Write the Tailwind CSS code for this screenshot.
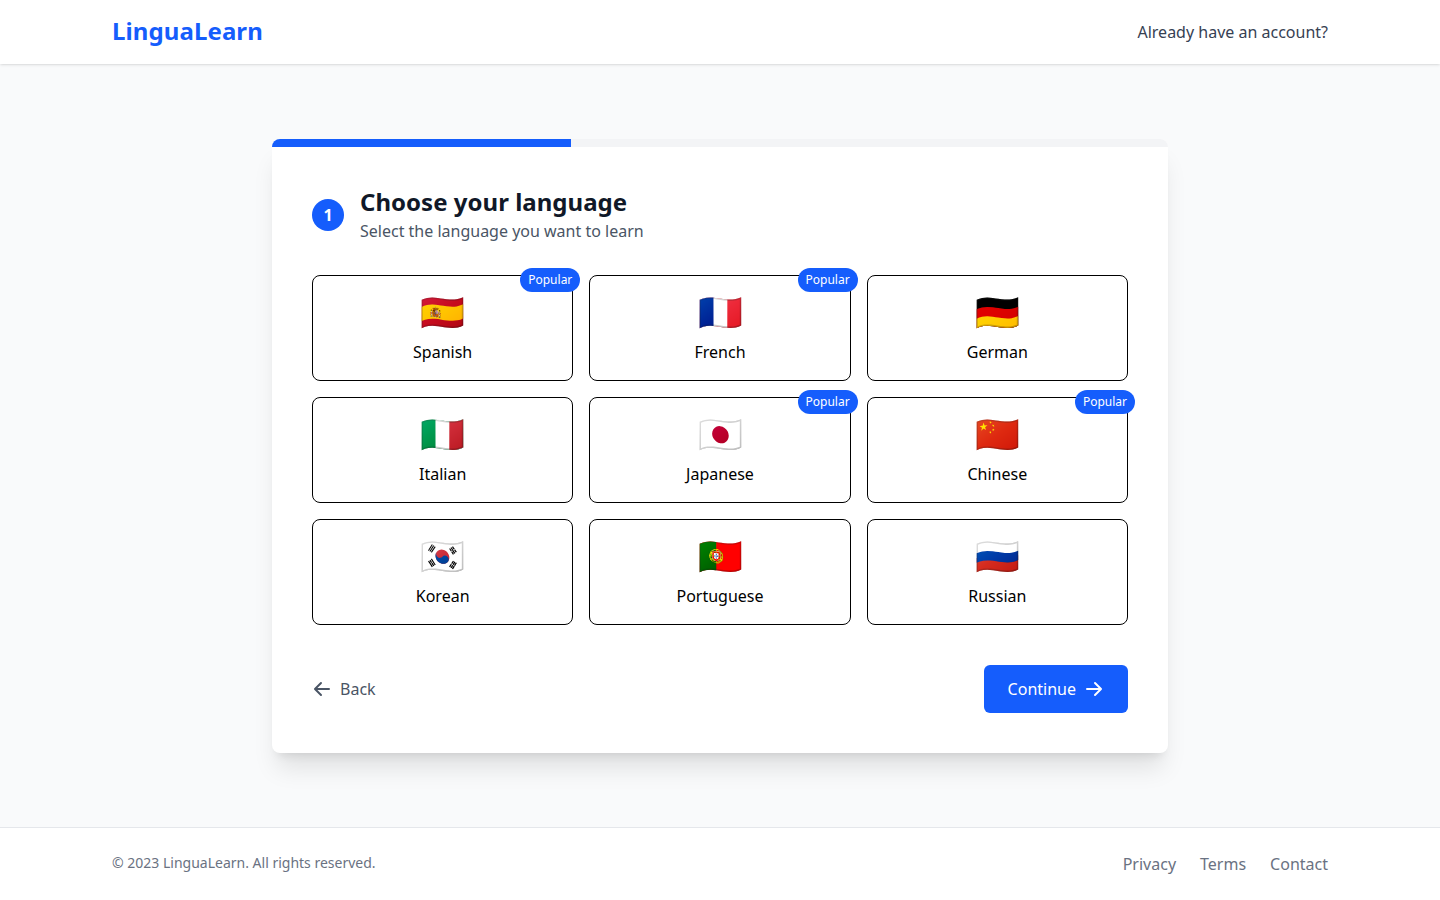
<!DOCTYPE html>
<html lang="en">
<head>
<meta charset="utf-8">
<title>LinguaLearn</title>
<script src="https://cdn.jsdelivr.net/npm/@tailwindcss/browser@4"></script>
</head>
<body class="font-['Noto_Sans',sans-serif]">
<div class="min-h-screen flex flex-col bg-gray-50">
  <header class="bg-white shadow-sm">
    <div class="max-w-7xl mx-auto px-8 h-16 flex items-center justify-between">
      <div class="text-2xl font-bold text-blue-600 pb-0.5 tracking-[0.1px]">LinguaLearn</div>
      <a class="text-gray-700">Already have an account?</a>
    </div>
  </header>
  <main class="flex-1 flex items-center justify-center">
    <div class="w-[896px] bg-white rounded-lg shadow-xl">
      <div class="h-2 bg-gray-100 rounded-t-lg overflow-hidden"><div class="h-full w-1/3 bg-blue-600"></div></div>
      <div class="p-10">
        <div class="flex items-center mb-8">
          <div class="w-8 h-8 rounded-full bg-blue-600 text-white font-bold flex items-center justify-center mr-4">1</div>
          <div>
            <h2 class="text-2xl/[30px] pb-0.5 font-bold text-gray-900 tracking-[0.02px]">Choose your language</h2>
            <p class="text-gray-600">Select the language you want to learn</p>
          </div>
        </div>
        <div class="grid grid-cols-3 gap-4 mb-10">
          <button class="relative border rounded-lg p-4 text-center"><span class="block pl-[0.5px] text-4xl mb-2">🇪🇸</span><span class="block">Spanish</span><span class="absolute -top-2 -right-2 bg-blue-600 text-white text-xs px-2 py-1 rounded-full">Popular</span></button>
          <button class="relative border rounded-lg p-4 text-center"><span class="block pl-[0.5px] text-4xl mb-2">🇫🇷</span><span class="block">French</span><span class="absolute -top-2 -right-2 bg-blue-600 text-white text-xs px-2 py-1 rounded-full">Popular</span></button>
          <button class="border rounded-lg p-4 text-center"><span class="block text-4xl mb-2">🇩🇪</span><span class="block">German</span></button>
          <button class="border rounded-lg p-4 text-center"><span class="block pl-[0.5px] text-4xl mb-2">🇮🇹</span><span class="block">Italian</span></button>
          <button class="relative border rounded-lg p-4 text-center"><span class="block pl-[0.5px] text-4xl mb-2">🇯🇵</span><span class="block">Japanese</span><span class="absolute -top-2 -right-2 bg-blue-600 text-white text-xs px-2 py-1 rounded-full">Popular</span></button>
          <button class="relative border rounded-lg p-4 text-center"><span class="block text-4xl mb-2">🇨🇳</span><span class="block">Chinese</span><span class="absolute -top-2 -right-2 bg-blue-600 text-white text-xs px-2 py-1 rounded-full">Popular</span></button>
          <button class="border rounded-lg p-4 text-center"><span class="block pl-[0.5px] text-4xl mb-2">🇰🇷</span><span class="block">Korean</span></button>
          <button class="border rounded-lg p-4 text-center"><span class="block pl-[0.5px] text-4xl mb-2">🇵🇹</span><span class="block">Portuguese</span></button>
          <button class="border rounded-lg p-4 text-center"><span class="block text-4xl mb-2">🇷🇺</span><span class="block">Russian</span></button>
        </div>
        <div class="flex items-center justify-between">
          <button class="flex items-center text-gray-600"><svg class="w-5 h-5 mr-2" viewBox="0 0 20 20" fill="currentColor"><path fill-rule="evenodd" clip-rule="evenodd" d="M9.707 16.707a1 1 0 01-1.414 0l-6-6a1 1 0 010-1.414l6-6a1 1 0 011.414 1.414L5.414 9H17a1 1 0 110 2H5.414l4.293 4.293a1 1 0 010 1.414z"/></svg>Back</button>
          <button class="flex items-center bg-blue-600 text-white px-6 py-3 rounded-md">Continue<svg class="w-5 h-5 ml-2" viewBox="0 0 20 20" fill="currentColor"><path fill-rule="evenodd" clip-rule="evenodd" d="M10.293 3.293a1 1 0 011.414 0l6 6a1 1 0 010 1.414l-6 6a1 1 0 01-1.414-1.414L14.586 11H3a1 1 0 110-2h11.586l-4.293-4.293a1 1 0 010-1.414z"/></svg></button>
        </div>
      </div>
    </div>
  </main>
  <footer class="bg-white border-t border-gray-200">
    <div class="max-w-7xl mx-auto px-8 py-6 flex items-center justify-between">
      <p class="text-sm text-gray-500 pb-0.5">© 2023 LinguaLearn. All rights reserved.</p>
      <div class="flex gap-6 text-gray-500"><a>Privacy</a><a>Terms</a><a>Contact</a></div>
    </div>
  </footer>
</div>
</body>
</html>
